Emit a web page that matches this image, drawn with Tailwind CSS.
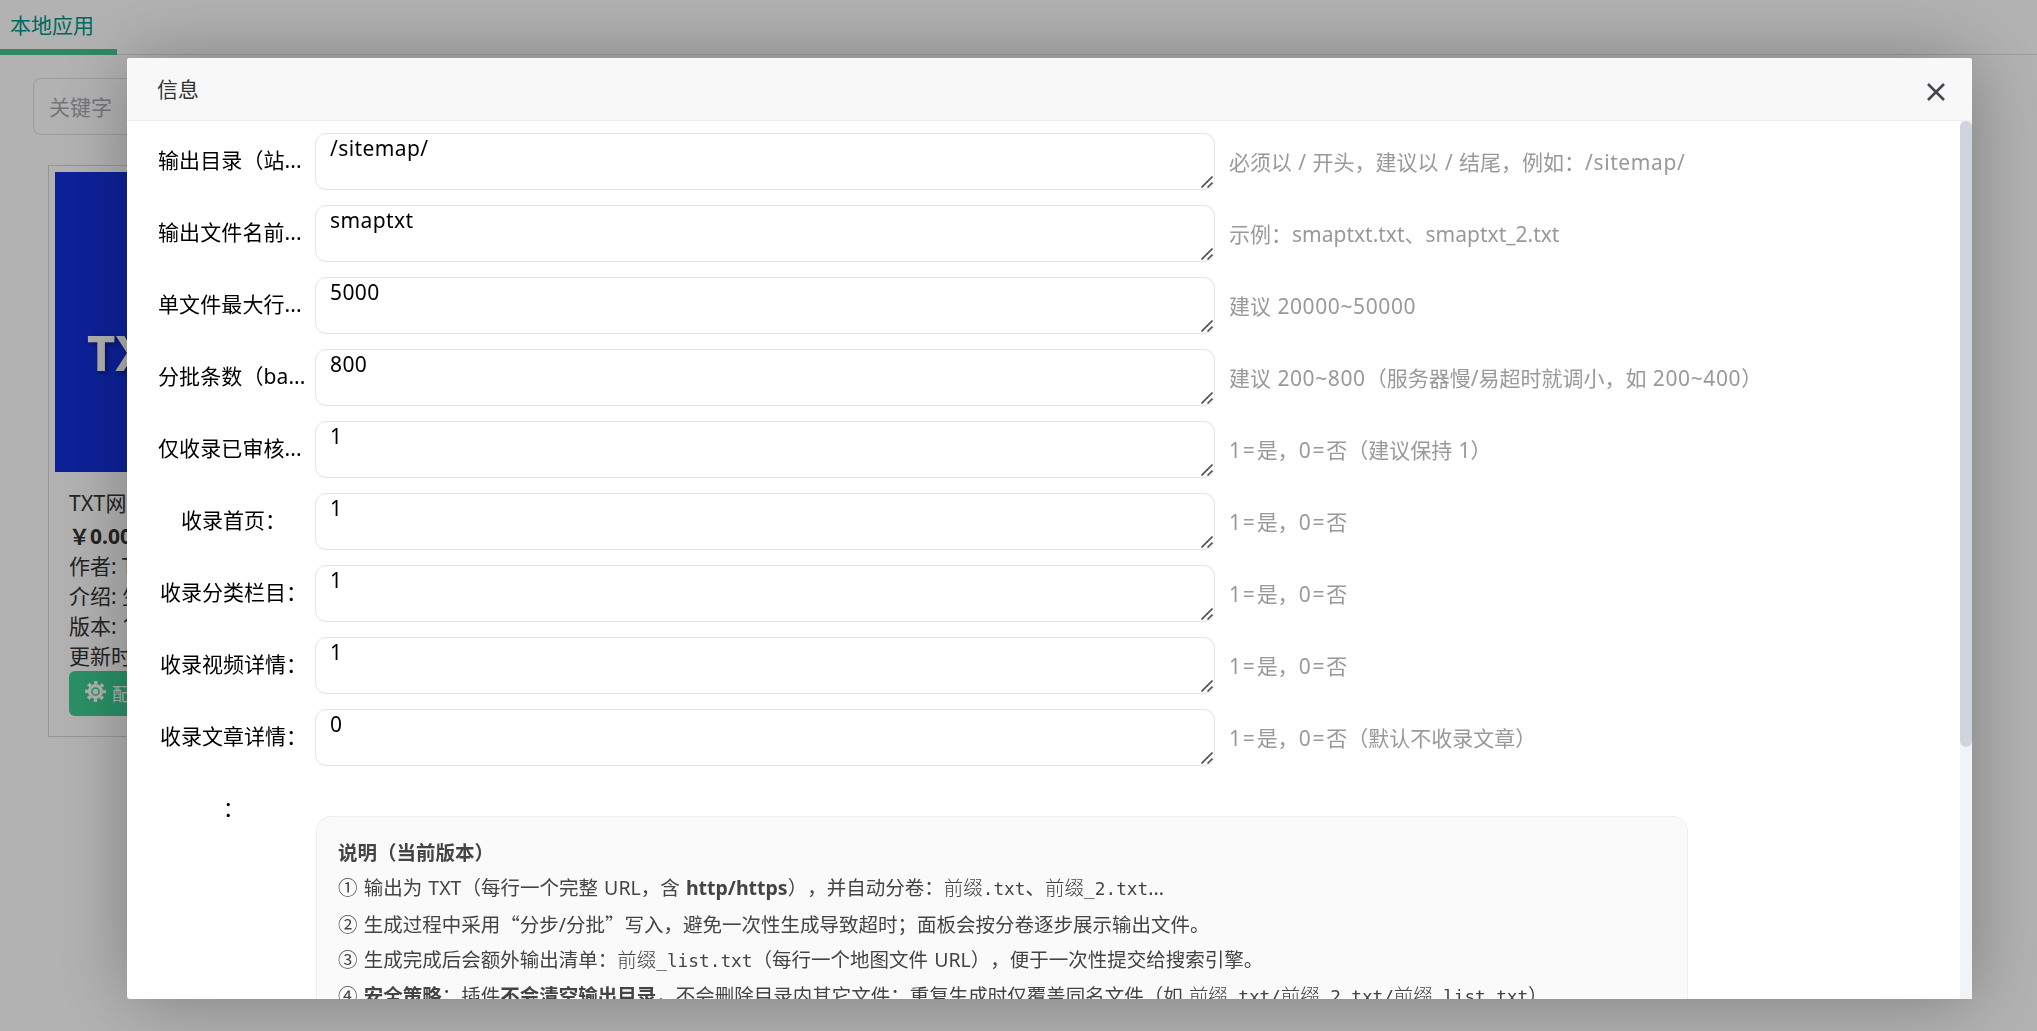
<!DOCTYPE html>
<html lang="zh-CN">
  <head>
    <meta charset="UTF-8" />
    <meta name="viewport" content="width=device-width, initial-scale=1.0" />
    <title>本地应用</title>
    <script src="https://cdn.jsdelivr.net/npm/@tailwindcss/browser@4"></script>
  </head>
  <body
    class="h-screen overflow-hidden bg-white text-[21px] text-[#333] font-['Noto_Sans','Noto_Sans_CJK_SC',sans-serif] [text-spacing-trim:space-all]"
  >
    <!-- Page behind the dialog -->
    <main class="h-screen overflow-hidden whitespace-nowrap">
      <nav class="flex h-[55px] border-b border-[#e2e2e2]">
        <div
          class="h-[55px] w-[117px] border-b-6 border-[#43c58c] pl-2.5 leading-[50px] text-[#009688]"
        >
          本地应用
        </div>
      </nav>
      <div
        class="mt-[23px] ml-[33px] h-[57px] w-[300px] rounded-lg border border-[#e2e2e2] pl-[15px] leading-[56px] text-[#a8a8b0]"
      >
        关键字
      </div>
      <section
        class="mt-[30px] ml-12 h-[572px] w-[330px] border border-[#d8d8d8] p-1.5"
      >
        <div
          class="h-[300px] bg-[#1230dc] pt-[146px] pl-8 text-[49px] leading-[68px] font-bold text-white text-shadow-[2px_2px_4px_rgb(0_0_0/0.4)]"
        >
          TXT
        </div>
        <div class="px-3.5 pt-[14px]">
          <h3 class="h-[35px] leading-[34px] tracking-[0.3px]">TXT网站地图</h3>
          <p class="h-[30px] leading-[30px] font-bold">￥0.00</p>
          <p class="h-[30px] leading-[30px]">作者: TXT</p>
          <p class="h-[30px] leading-[30px]">介绍: 生成网站地图</p>
          <p class="h-[30px] leading-[30px]">版本: 1.0</p>
          <p class="h-[30px] leading-[30px]">更新时间:</p>
          <button
            class="flex h-[45px] w-[100px] items-center gap-1.5 rounded-md bg-[#3ecf93] pl-4 text-lg text-white"
          >
            <svg class="mb-1 size-[21px] shrink-0" viewBox="0 0 21 21" fill="none" stroke="currentColor">
              <circle cx="10.5" cy="10.5" r="7.6" fill="currentColor" stroke="none" />
              <circle cx="10.5" cy="10.5" r="8.8" stroke-width="3.2" stroke-dasharray="3.4 3.51" stroke-dashoffset="1.7" />
              <circle cx="10.5" cy="10.5" r="3.6" stroke="#3ecf93" stroke-width="1.5" />
            </svg>
            <span>配置</span>
          </button>
        </div>
      </section>
    </main>

    <!-- Shade -->
    <div class="fixed inset-0 bg-black/30"></div>

    <!-- Dialog -->
    <div
      class="fixed top-[58px] left-[127px] flex h-[941px] w-[1845px] flex-col rounded-[3px] bg-white shadow-[1px_1px_75px_rgb(0_0_0/0.3)]"
    >
      <header
        class="flex h-[63px] shrink-0 items-center justify-between rounded-t-[3px] border-b border-[#eee] bg-[#f8f8f8] pr-[27px] pl-[30px]"
      >
        <h2 class="pt-0.5">信息</h2>
        <button class="mt-[5px]">
          <svg class="size-[18px]" viewBox="0 0 18 18" fill="none" stroke="#45444f" stroke-width="2.6">
            <path d="M1 1l16 16M17 1L1 17" />
          </svg>
        </button>
      </header>

      <div class="flex min-h-0 flex-1">
        <div class="min-w-0 flex-1 overflow-hidden whitespace-nowrap text-black">
          <div id="rows" class="flex flex-col gap-[15px] pt-3"></div>

          <div class="mt-[15px] flex">
            <div class="ml-[31px] h-[57px] w-[151px] text-center leading-[55px]">：</div>
            <div
              class="mt-[35px] ml-[7px] h-[300px] w-[1372px] rounded-[15px] border border-[#eee] bg-[#fafafa] px-[21px] py-[18px] text-[19.5px] leading-[35.1px] text-[#444] [word-spacing:1.1px]"
            >
              <p class="font-bold">说明（当前版本）</p>
              <p>① 输出为 TXT（每行一个完整 URL，含 <b>http/https</b>），并自动分卷：<code class="font-['DejaVu_Sans_Mono','Noto_Sans_CJK_SC',monospace] text-[17.8px]"><span class="text-[19.5px] font-light">前缀</span>.txt</code>、<code class="font-['DejaVu_Sans_Mono','Noto_Sans_CJK_SC',monospace] text-[17.8px]"><span class="text-[19.5px] font-light">前缀</span>_2.txt</code>...</p>
              <p>② 生成过程中采用<span class="font-['Noto_Sans_CJK_SC',sans-serif]">“</span>分步/分批<span class="font-['Noto_Sans_CJK_SC',sans-serif]">”</span>写入，避免一次性生成导致超时；面板会按分卷逐步展示输出文件。</p>
              <p>③ 生成完成后会额外输出清单：<code class="font-['DejaVu_Sans_Mono','Noto_Sans_CJK_SC',monospace] text-[17.8px]"><span class="text-[19.5px] font-light">前缀</span>_list.txt</code>（每行一个地图文件 URL），便于一次性提交给搜索引擎。</p>
              <p>④ <b>安全策略</b>：插件<b>不会清空输出目录</b>，不会删除目录内其它文件；重复生成时仅覆盖同名文件（如 <code class="font-['DejaVu_Sans_Mono','Noto_Sans_CJK_SC',monospace] text-[17.8px] tracking-[-0.1px]"><span class="text-[19.5px] font-light">前缀</span>.txt/<span class="text-[19.5px] font-light">前缀</span>_2.txt/<span class="text-[19.5px] font-light">前缀</span>_list.txt</code>）</p>
            </div>
          </div>
        </div>

        <!-- Scrollbar -->
        <div class="w-3 shrink-0 bg-[#f1f4f7]">
          <div class="h-[626px] rounded-full bg-[#d0d4dd]"></div>
        </div>
      </div>
    </div>

    <script>
      const fields = [
        { label: "输出目录（站...", value: "/sitemap/", hint: "必须以 / 开头，建议以 / 结尾，例如：/sitemap/", cut: true },
        { label: "输出文件名前...", value: "smaptxt", hint: "示例：smaptxt.txt、smaptxt_2.txt", cut: true },
        { label: "单文件最大行...", value: "5000", hint: "建议 20000~50000", cut: true },
        { label: "分批条数（ba...", value: "800", hint: "建议 200~800（服务器慢/易超时就调小，如 200~400）", cut: true },
        { label: "仅收录已审核...", value: "1", hint: "1=是，0=否（建议保持 1）", cut: true },
        { label: "收录首页：", value: "1", hint: "1=是，0=否" },
        { label: "收录分类栏目：", value: "1", hint: "1=是，0=否" },
        { label: "收录视频详情：", value: "1", hint: "1=是，0=否" },
        { label: "收录文章详情：", value: "0", hint: "1=是，0=否（默认不收录文章）" },
      ];

      // Loosen digits and signs a little inside the Chinese hints
      const spaceOut = (text) =>
        text.replace(/[0-9~]{3,}|[01]=|\/sitemap\//g, (run) =>
          run.includes("=")
            ? `<span class="tracking-[1.8px]">${run}</span>`
            : `<span class="tracking-[0.6px]">${run}</span>`
        );

      document.getElementById("rows").innerHTML = fields
        .map(
          (f) => `
          <div class="flex h-[57px]">
            <div class="ml-[31px] w-[151px] leading-[55px] ${f.cut ? "text-left tracking-[0.1px]" : "text-center"}">${f.label}</div>
            <div class="relative ml-1.5 w-[900px]">
              <textarea class="block h-[57px] w-full resize-none overflow-hidden rounded-[11px] border border-[#e4e4e4] px-3.5 leading-[29px] tracking-[0.4px] outline-none">${f.value}</textarea>
              <svg class="absolute right-0.5 bottom-0.5 size-3" viewBox="0 0 12 12" stroke="#555" stroke-width="1.7">
                <path d="M0.5 11.5l11-11M6.5 11.5l5-5" />
              </svg>
            </div>
            <div class="ml-3.5 leading-[58px] text-[#999] [word-spacing:0.9px]">${spaceOut(f.hint)}</div>
          </div>`
        )
        .join("");
    </script>
  </body>
</html>
